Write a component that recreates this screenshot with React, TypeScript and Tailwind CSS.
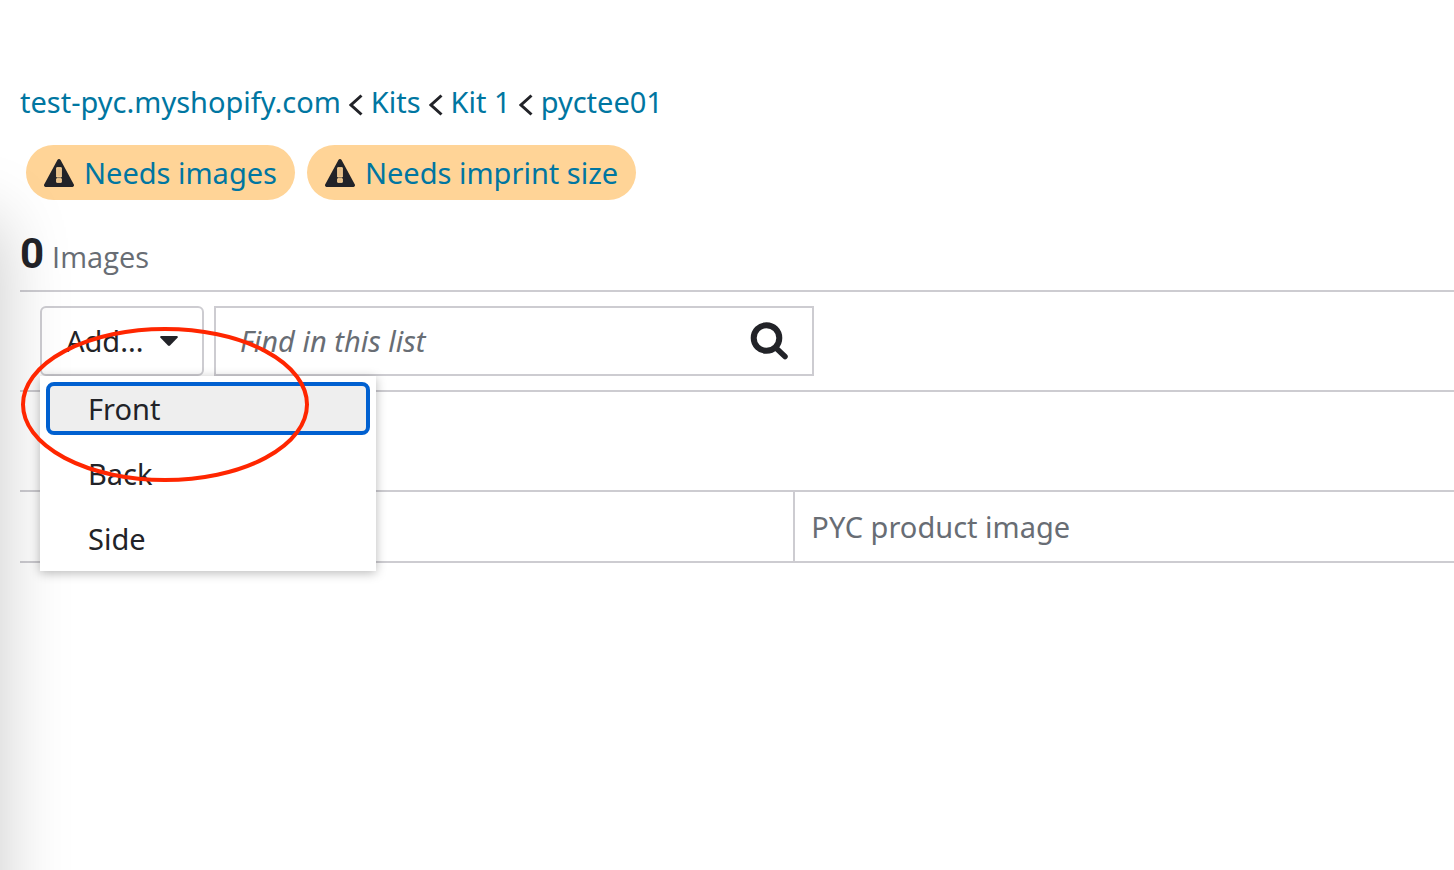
import { Fragment, useState } from 'react';

const crumbs = ['test-pyc.myshopify.com', 'Kits', 'Kit 1', 'pyctee01'];
const warnings = ['Needs images', 'Needs imprint size'];
const locations = ['Front', 'Back', 'Side'];

function ChevronLeft() {
    return (
        <svg width="14" height="22" viewBox="0 0 14 22" fill="none" aria-hidden>
            <path d="M12.5 1.5L2 11l10.5 9.5" stroke="currentColor" strokeWidth="3" />
        </svg>
    );
}

function WarningIcon() {
    return (
        <svg width="30" height="28" viewBox="0 0 30 28" aria-hidden>
            <path
                d="M13.4 1a1.9 1.9 0 0 1 3.2 0l13.1 24.2a1.8 1.8 0 0 1-1.6 2.8H1.9a1.8 1.8 0 0 1-1.6-2.8z"
                fill="currentColor"
            />
            <path
                d="M12.7 8.700h4.600v9.300h-4.600zM12.700 19.700h4.600v3.600h-4.600z"
                fill="#e6bf8a"
                stroke="#ffd497"
                strokeWidth="1"
            />
        </svg>
    );
}

function SearchIcon() {
    return (
        <svg width="38" height="38" viewBox="0 0 38 38" fill="none" aria-hidden>
            <circle cx="16.5" cy="16" r="12.8" stroke="currentColor" strokeWidth="6" />
            <path
                d="M26 26l9 8.5"
                stroke="currentColor"
                strokeWidth="5.5"
                strokeLinecap="round"
            />
        </svg>
    );
}

export default function App() {
    const [open, setOpen] = useState(true);
    const [query, setQuery] = useState('');

    return (
        <div className="relative min-h-screen overflow-hidden bg-white pt-[79px] pl-5 font-['Noto_Sans',sans-serif] text-[29px] leading-[46px] text-[#222328]">
            <nav aria-label="Breadcrumb" className="flex items-center">
                {crumbs.map((crumb, i) => (
                    <Fragment key={crumb}>
                        {i > 0 && (
                            <span className="px-2 pt-[6px]">
                                <ChevronLeft />
                            </span>
                        )}
                        <a href="#" className="text-[#0076a1]">
                            {crumb}
                        </a>
                    </Fragment>
                ))}
            </nav>

            <div className="mt-5 flex gap-3 pl-[6px]">
                {warnings.map((warning) => (
                    <div
                        key={warning}
                        className="flex h-[55px] items-center gap-[10px] rounded-full bg-[#ffd497] px-[18px]"
                    >
                        <WarningIcon />
                        <a href="#" className="text-[#0076a1]">
                            {warning}
                        </a>
                    </div>
                ))}
            </div>

            <h1 className="mt-[31px] flex items-baseline gap-2 pb-[10px]">
                <span className="font-['Roboto',sans-serif] text-[42px] font-bold">0</span>
                <span className="font-['Open_Sans',sans-serif] text-[#686d74]">Images</span>
            </h1>

            <div className="flex gap-[10px] border-y-2 border-[#cdccd1] py-[14px] pl-5">
                <div className="relative">
                    <button
                        type="button"
                        aria-haspopup="menu"
                        aria-expanded={open}
                        onClick={() => setOpen(!open)}
                        className="flex h-[70px] w-[164px] items-center justify-between rounded-md border-2 border-[#cdccd1] px-6"
                    >
                        Add...
                        <svg width="18" height="10" viewBox="0 0 18 10" aria-hidden>
                            <path
                                d="M1 0h16q1.5.6.5 1.800L10 9.500q-1 .8-2 0L.5 1.800Q-.5.6 1 0z"
                                fill="currentColor"
                            />
                        </svg>
                    </button>

                    {open && (
                        <div
                            role="menu"
                            className="absolute top-[70px] left-0 z-10 w-[336px] bg-white shadow-[0_2px_10px_rgba(0,0,0,0.28)]"
                        >
                            {locations.map((location, i) => (
                                <div key={location} className="p-[6px]">
                                    <button
                                        type="button"
                                        role="menuitem"
                                        onClick={() => setOpen(false)}
                                        className={`flex h-[53px] w-full items-center rounded-lg border-4 px-[38px] ${
                                            i === 0
                                                ? 'border-[#0060d0] bg-[#eeeeee]'
                                                : 'border-transparent'
                                        }`}
                                    >
                                        {location}
                                    </button>
                                </div>
                            ))}
                        </div>
                    )}

                    {/* Hand-drawn callout around the first option */}
                    <svg
                        className="pointer-events-none absolute top-[20px] left-[-20px] z-20"
                        width="290"
                        height="157"
                        viewBox="0 0 290 157"
                        fill="none"
                        aria-hidden
                    >
                        <ellipse cx="145" cy="78.5" rx="142" ry="75.5" stroke="#ff2600" strokeWidth="4" />
                    </svg>
                </div>

                <div className="flex h-[70px] w-[600px] items-center border-2 border-[#cdccd1] px-6">
                    <input
                        type="search"
                        aria-label="Find in this list"
                        placeholder="Find in this list"
                        value={query}
                        onChange={(e) => setQuery(e.target.value)}
                        className="min-w-0 flex-1 italic outline-none placeholder:text-[#686d74]"
                    />
                    <button type="button" aria-label="Search">
                        <SearchIcon />
                    </button>
                </div>
            </div>

            <table className="mt-[98px] w-full border-y-2 border-[#cdccd1] text-left text-[#686d74]">
                <thead>
                    <tr className="h-[71px]">
                        <th className="w-[54%] border-r-2 border-[#cdccd1]" aria-label="Location" />
                        <th className="px-4 font-normal">PYC product image</th>
                    </tr>
                </thead>
            </table>

            {/* Shadow cast by the side panel */}
            <div className="pointer-events-none absolute top-[220px] -bottom-40 -left-40 w-40 shadow-[0_0_70px_rgba(0,0,0,0.21)]" />
        </div>
    );
}
